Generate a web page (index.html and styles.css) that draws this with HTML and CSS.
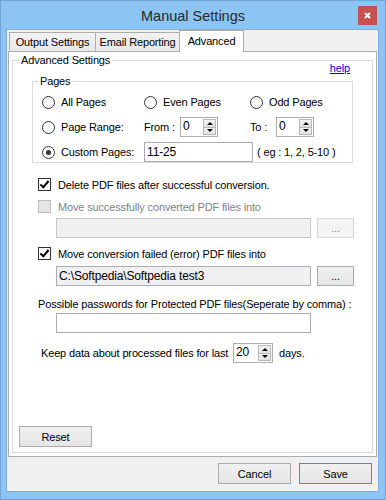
FILE: index.html
```html
<!DOCTYPE html>
<html lang="en">
<head>
    <meta charset="UTF-8">
    <title>Manual Settings</title>
    <link rel="stylesheet" href="styles.css">
</head>
<body>
    <div class="window">
        <div class="titlebar">
            <span class="title">Manual Settings</span>
            <div class="close-btn">
                <svg width="7" height="7" viewBox="0 0 7 7">
                    <path d="M1 1 L6 6 M6 1 L1 6" stroke="#fff" stroke-width="1.8"/>
                </svg>
            </div>
        </div>

        <div class="client">
            <div class="tabs">
                <div class="tab">Output Settings</div>
                <div class="tab">Email Reporting</div>
                <div class="tab active">Advanced</div>
            </div>

            <div class="tab-page">
                <div class="group main-group">
                    <span class="group-title">Advanced Settings</span>
                    <div class="help-row"><a href="#" class="help-link">help</a></div>

                    <div class="group pages-group">
                        <span class="group-title">Pages</span>
                        <div class="pages-grid">
                            <label class="opt"><span class="radio"></span>All Pages</label>
                            <label class="opt"><span class="radio"></span>Even Pages</label>
                            <label class="opt"><span class="radio"></span>Odd Pages</label>

                            <label class="opt"><span class="radio"></span>Page Range:</label>
                            <div class="opt">
                                <span class="from-label">From :</span>
                                <div class="spin">
                                    <span class="spin-val">0</span>
                                    <div class="spin-btns">
                                        <span class="spin-btn"><i class="arrow-up"></i></span>
                                        <span class="spin-btn"><i class="arrow-down"></i></span>
                                    </div>
                                </div>
                            </div>
                            <div class="opt">
                                <span class="to-label">To :</span>
                                <div class="spin">
                                    <span class="spin-val">0</span>
                                    <div class="spin-btns">
                                        <span class="spin-btn"><i class="arrow-up"></i></span>
                                        <span class="spin-btn"><i class="arrow-down"></i></span>
                                    </div>
                                </div>
                            </div>

                            <label class="opt"><span class="radio checked"></span>Custom Pages:</label>
                            <div class="opt custom-cell">
                                <div class="textbox custom-box">11-25</div>
                                <span class="hint">( eg : 1, 2, 5-10 )</span>
                            </div>
                        </div>
                    </div>

                    <label class="check-row row-delete"><span class="checkbox checked"></span>Delete PDF files after successful conversion.</label>
                    <label class="check-row row-moveok disabled"><span class="checkbox"></span>Move successfully converted PDF files into</label>
                    <div class="path-row row-path1">
                        <div class="textbox path-box disabled"></div>
                        <button class="btn browse-btn" disabled>...</button>
                    </div>
                    <label class="check-row row-movefail"><span class="checkbox checked"></span>Move conversion failed (error) PDF files into</label>
                    <div class="path-row row-path2">
                        <div class="textbox path-box readonly">C:\Softpedia\Softpedia test3</div>
                        <button class="btn browse-btn">...</button>
                    </div>

                    <div class="text-row row-pass">Possible passwords for Protected PDF files(Seperate by comma) :</div>
                    <div class="path-row row-passbox">
                        <div class="textbox path-box"></div>
                    </div>

                    <div class="keep-row">
                        <span class="keep-label">Keep data about processed files for last</span>
                        <div class="spin keep-spin">
                            <span class="spin-val">20</span>
                            <div class="spin-btns">
                                <span class="spin-btn"><i class="arrow-up"></i></span>
                                <span class="spin-btn"><i class="arrow-down"></i></span>
                            </div>
                        </div>
                        <span class="days-label">days.</span>
                    </div>

                    <button class="btn reset-btn">Reset</button>
                </div>
            </div>

            <div class="footer">
                <button class="btn">Cancel</button>
                <button class="btn default-btn">Save</button>
            </div>
        </div>
    </div>
</body>
</html>
```

FILE: styles.css
```css
body {
    margin: 0;
    padding: 0;
    font-family: "Liberation Sans", Arial, sans-serif;
    font-size: 11px;
    letter-spacing: -0.15px;
    color: #000;
}
.window {
    width: 386px;
    height: 500px;
    box-sizing: border-box;
    background-color: #8cc4f4;
    border: 1px solid #70a3d8;
    display: flex;
    flex-direction: column;
}
.titlebar {
    height: 29px;
    display: flex;
    align-items: center;
    justify-content: center;
    position: relative;
}
.title {
    font-size: 14.5px;
    letter-spacing: 0;
    color: #2a2a2a;
}
.close-btn {
    position: absolute;
    top: 5px;
    right: 8px;
    width: 19px;
    height: 19px;
    background-color: #c75050;
    display: flex;
    align-items: center;
    justify-content: center;
}
.client {
    margin: 0 7px 8px 6px;
    flex: 1;
    background-color: #f0f0f0;
    box-shadow: 0 0 0 1px #7eaedc;
    display: flex;
    flex-direction: column;
}

/* tabs */
.tabs {
    height: 21px;
    display: flex;
    align-items: flex-end;
    padding-left: 2px;
}
.tab {
    height: 19px;
    box-sizing: border-box;
    border: 1px solid #acacac;
    border-bottom: none;
    background: linear-gradient(#f2f2f2, #e8e8e8);
    padding: 0;
    line-height: 18px;
    margin-left: -1px;
    white-space: nowrap;
    text-align: center;
}
.tab:first-child {
    margin-left: 0;
    width: 87px;
}
.tab:nth-child(2) {
    width: 85px;
}
.tab.active {
    height: 22px;
    width: 65px;
    margin-bottom: -1px;
    background: #fff;
    position: relative;
    z-index: 1;
    line-height: 20px;
}
.tab-page {
    height: 406px;
    box-sizing: border-box;
    margin: 0 1px;
    border: 1px solid #acacac;
    background-color: #fff;
    padding: 8px 3px 3px 3px;
    display: flex;
}

/* group boxes */
.group {
    border: 1px solid #dcdcdc;
    position: relative;
}
.group-title {
    position: absolute;
    top: -8px;
    left: 6px;
    line-height: 15px;
    padding: 0 2px;
    background-color: #fff;
}
.main-group {
    flex: 1;
    display: flex;
    flex-direction: column;
}
.help-row {
    height: 15px;
    line-height: 15px;
    text-align: right;
    padding-right: 22px;
}
.help-link {
    color: #0000ee;
    text-decoration: underline;
}
.pages-group {
    margin: 5px 0 0 19px;
    width: 321px;
    box-sizing: border-box;
    padding: 10px 0 0 9px;
}
.pages-group .group-title {
    left: 5px;
}
.pages-grid {
    display: grid;
    grid-template-columns: 102px 106px 1fr;
    grid-template-rows: 20px 20px 20px;
    row-gap: 5px;
}
.opt {
    display: flex;
    align-items: center;
    white-space: nowrap;
}
.custom-cell {
    grid-column: 2 / 4;
}
.radio {
    width: 13px;
    height: 13px;
    box-sizing: border-box;
    border: 1px solid #333;
    border-radius: 50%;
    background: #fff;
    margin-right: 6px;
    display: inline-flex;
    align-items: center;
    justify-content: center;
    flex-shrink: 0;
}
.radio.checked::after {
    content: "";
    width: 5px;
    height: 5px;
    border-radius: 50%;
    background: #333;
}
.from-label {
    width: 36px;
}
.to-label {
    width: 26px;
}
.spin {
    width: 38px;
    height: 20px;
    box-sizing: border-box;
    border: 1px solid #abadb3;
    background: #fff;
    display: flex;
}
.spin-val {
    flex: 1;
    padding-left: 2px;
    line-height: 17px;
    font-size: 12px;
}
.spin-btns {
    width: 13px;
    display: flex;
    flex-direction: column;
    padding: 1px 1px 1px 0;
}
.spin-btn {
    flex: 1;
    border: 1px solid #b8b8b8;
    background: linear-gradient(#f4f4f4, #e2e2e2);
    display: flex;
    align-items: center;
    justify-content: center;
}
.spin-btn + .spin-btn {
    border-top: none;
}
.arrow-up {
    border-left: 3px solid transparent;
    border-right: 3px solid transparent;
    border-bottom: 3px solid #000;
}
.arrow-down {
    border-left: 3px solid transparent;
    border-right: 3px solid transparent;
    border-top: 3px solid #000;
}
.textbox {
    height: 20px;
    box-sizing: border-box;
    border: 1px solid #abadb3;
    background: #fff;
    padding-left: 2px;
    line-height: 18px;
    font-size: 12px;
}
.custom-box {
    width: 109px;
    margin-right: 4px;
}

/* check rows */
.check-row {
    display: flex;
    align-items: center;
    height: 15px;
    margin-left: 25px;
}
.checkbox {
    width: 13px;
    height: 13px;
    box-sizing: border-box;
    border: 1px solid #333;
    background: #fff;
    margin-right: 7px;
    position: relative;
}
.checkbox.checked::after {
    content: "";
    position: absolute;
    left: 3px;
    top: 0px;
    width: 3px;
    height: 7px;
    border-right: 2px solid #000;
    border-bottom: 2px solid #000;
    transform: rotate(40deg);
}
.check-row.disabled {
    color: #838383;
}
.check-row.disabled .checkbox {
    background: #e6e6e6;
    border-color: #bcbcbc;
}
.row-delete {
    margin-top: 14px;
}
.row-moveok {
    margin-top: 7px;
}
.row-movefail {
    margin-top: 8px;
}
.path-row {
    display: flex;
    margin-left: 43px;
}
.row-path1 {
    margin-top: 4px;
}
.row-path2 {
    margin-top: 5px;
}
.path-box {
    width: 255px;
}
.path-box.disabled {
    background: #f0f0f0;
    border-color: #c8c8c8;
}
.path-box.readonly {
    background: #f0f0f0;
}
.browse-btn {
    width: 37px;
    height: 20px;
    margin-left: 6px;
}
.text-row {
    margin: 11px 0 0 25px;
    line-height: 15px;
}
.row-passbox {
    margin-top: 1px;
}
.keep-row {
    display: flex;
    align-items: center;
    margin: 10px 0 0 28px;
}
.keep-label {
    width: 192px;
}
.keep-spin {
    width: 40px;
}
.days-label {
    margin-left: 6px;
}

/* buttons */
.btn {
    font-family: "Liberation Sans", Arial, sans-serif;
    font-size: 11px;
    letter-spacing: -0.15px;
    color: #000;
    border: 1px solid #acacac;
    background: linear-gradient(#f0f0f0, #e5e5e5);
    padding: 0;
    box-sizing: border-box;
}
.btn:disabled {
    background: #f4f4f4;
    border-color: #d9d9d9;
    color: #838383;
}
.reset-btn {
    width: 73px;
    height: 21px;
    margin: auto 0 5px 6px;
}
.footer {
    flex: 1;
    display: flex;
    justify-content: flex-end;
    align-items: flex-start;
    gap: 8px;
    padding: 6px 6px 0 0;
}
.footer .btn {
    width: 73px;
    height: 21px;
}
.default-btn {
    border-color: #3c8fe3;
}
```
